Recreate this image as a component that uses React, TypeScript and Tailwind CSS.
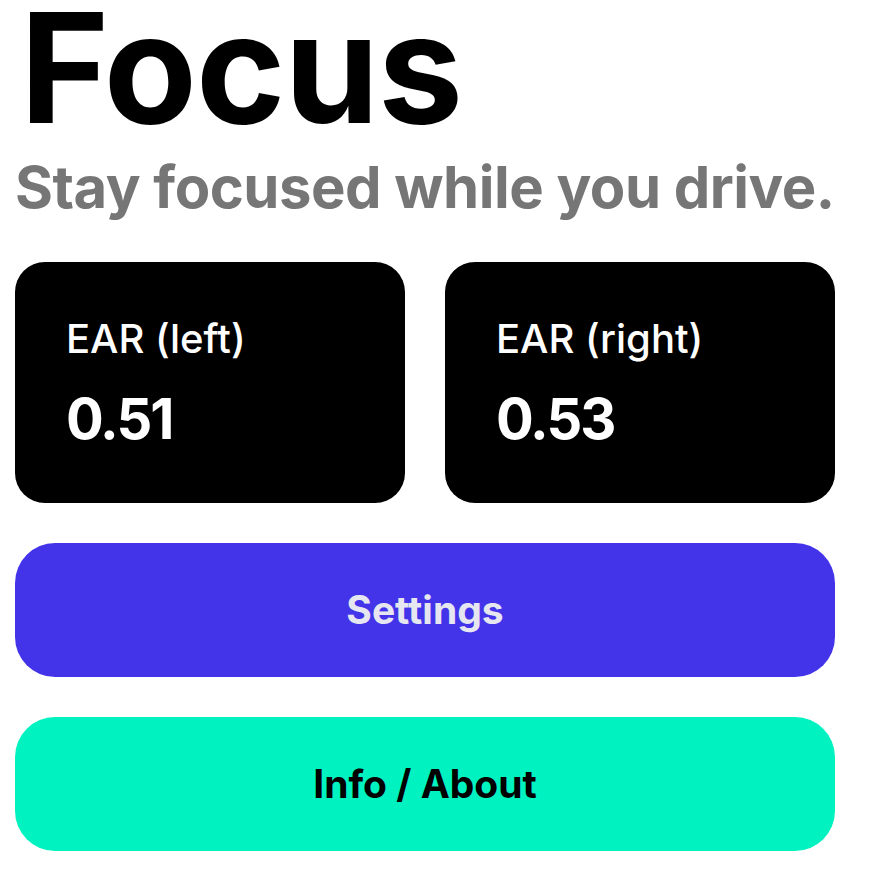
export default function App() {
  const cards = [
    { label: "EAR (left)", value: "0.51" },
    { label: "EAR (right)", value: "0.53" },
  ];

  return (
    <div className="min-h-[870px] w-[875px] bg-white font-['Inter','Liberation_Sans',sans-serif]">
      <div className="ml-[15px] flex w-[820px] flex-col">
        <h1 className="pl-[5px] text-[152px] font-bold leading-[136px] tracking-[-1px] text-black">
          Focus
        </h1>
        <p className="mt-[16px] text-[58px] font-bold leading-[70px] tracking-[-0.5px] text-[#767676]">
          Stay focused while you drive.
        </p>

        <div className="mt-[40px] grid grid-cols-2 gap-[40px]">
          {cards.map((c) => (
            <div
              key={c.label}
              className="flex h-[241px] flex-col justify-center rounded-[30px] bg-black px-[51px] text-white"
            >
              <span className="text-[40px] font-medium leading-[44px]">{c.label}</span>
              <span className="mt-[28px] text-[56px] font-bold leading-[60px] tracking-[-2px]">
                {c.value}
              </span>
            </div>
          ))}
        </div>

        <button className="mt-[40px] flex h-[134px] items-center justify-center rounded-[40px] bg-[#4334EA] text-[39px] font-bold text-[#E6E6F0]">
          Settings
        </button>
        <button className="mt-[40px] flex h-[134px] items-center justify-center rounded-[40px] bg-[#00F2C0] text-[39px] font-bold text-black">
          Info / About
        </button>
      </div>
    </div>
  );
}
